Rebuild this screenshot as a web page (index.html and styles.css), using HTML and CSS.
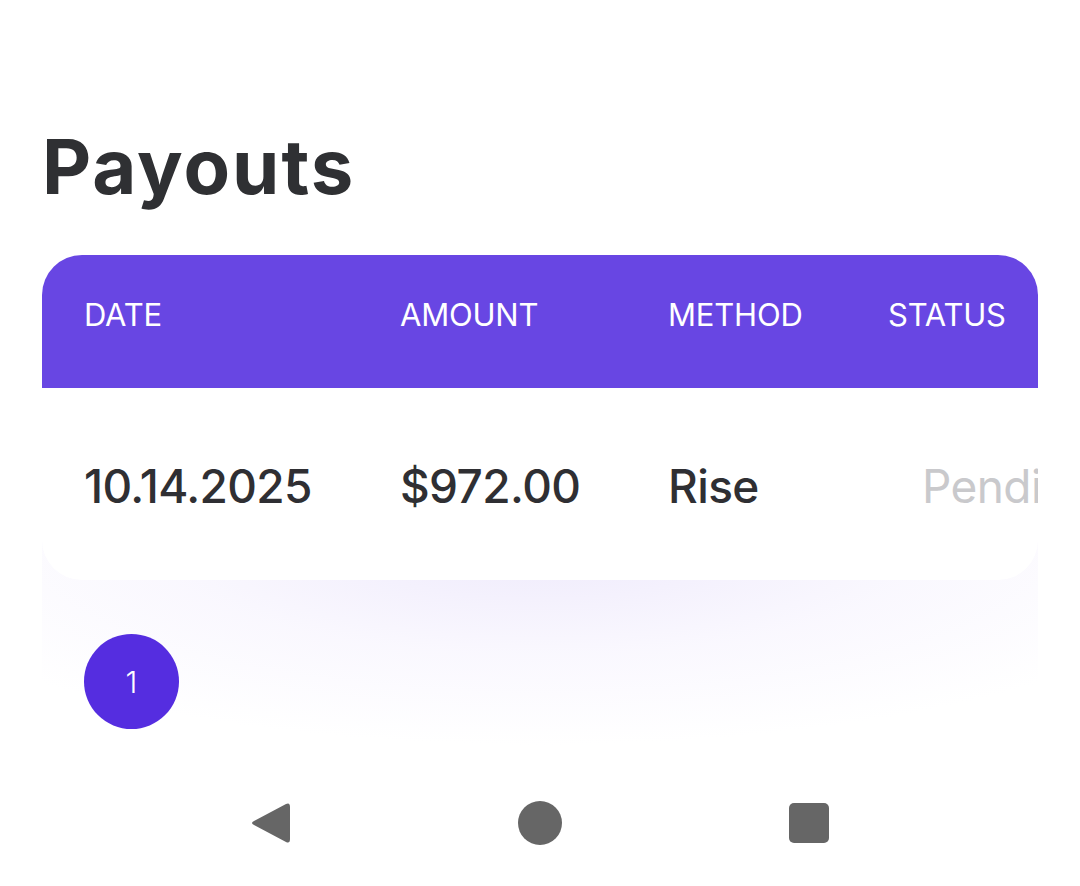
FILE: index.html
```html
<!DOCTYPE html>
<html lang="en">
<head>
<meta charset="utf-8">
<title>Payouts</title>
<link rel="stylesheet" href="styles.css">
</head>
<body>
<main class="screen">
  <h1 class="title">Payouts</h1>
  <section class="panel">
    <div class="table">
      <div class="row head">
        <div class="cell">DATE</div>
        <div class="cell">AMOUNT</div>
        <div class="cell">METHOD</div>
        <div class="cell">STATUS</div>
      </div>
      <div class="row body">
        <div class="cell">10.14.2025</div>
        <div class="cell">$972.00</div>
        <div class="cell">Rise</div>
        <div class="cell status">Pending</div>
      </div>
    </div>
    <div class="pager">
      <span class="page">1</span>
    </div>
  </section>
</main>
<nav class="navbar">
  <svg class="nav-icon" width="44" height="46" viewBox="0 0 44 46"><path d="M38 4 Q42 2 42 7 V39 Q42 44 38 42 L6 25 Q2 23 6 21 Z" fill="#666"/></svg>
  <svg class="nav-icon" width="46" height="46" viewBox="0 0 46 46"><circle cx="23" cy="23" r="22" fill="#666"/></svg>
  <svg class="nav-icon" width="42" height="42" viewBox="0 0 42 42"><rect x="1" y="1" width="40" height="40" rx="5" fill="#666"/></svg>
</nav>
</body>
</html>
```
FILE: styles.css
```css
* { box-sizing: border-box; }
html, body { margin: 0; padding: 0; background: #fff; }
body {
  width: 1080px;
  height: 886px;
  overflow: hidden;
  font-family: Inter, "Open Sans", Roboto, sans-serif;
  color: #2f2f33;
}
.screen {
  padding: 118px 42px 0 42px;
  height: 770px;
}
.title {
  margin: 0;
  font-size: 76px;
  line-height: 96px;
  font-weight: 700;
  letter-spacing: 2px;
  color: #2f3033;
}
.panel {
  margin-top: 41px;
  height: 490px;
  display: flex;
  flex-direction: column;
}
.table {
  border-radius: 40px;
  overflow: hidden;
  background: #fff;
  position: relative;
  z-index: 1;
}
.row {
  display: grid;
  grid-template-columns: 316px 268px 220px auto;
  padding-left: 42px;
  white-space: nowrap;
}
.head {
  background: #6846e3;
  color: #fff;
  height: 133px;
  padding-top: 41px;
  font-size: 31px;
  line-height: 38px;
  font-weight: 400;
  letter-spacing: -0.2px;
}
.body {
  height: 192px;
  align-items: center;
  font-size: 46px;
  font-weight: 500;
  letter-spacing: -0.6px;
  color: #2f2f33;
  padding-top: 4px;
}
.status {
  padding-left: 34px;
  color: #c9c9cc;
  font-weight: 400;
  overflow: hidden;
}
.pager {
  flex: 1;
  margin-top: -40px;
  padding: 94px 0 0 42px;
  background:
    radial-gradient(ellipse 70% 100% at 50% 0, rgba(236, 231, 251, 0.9) 0, rgba(246, 243, 254, 0.6) 55%, rgba(255, 255, 255, 0) 100%);
}
.page {
  display: flex;
  align-items: center;
  justify-content: center;
  width: 95px;
  height: 95px;
  border-radius: 50%;
  background: #552de0;
  color: #fff;
  font-size: 30px;
  font-weight: 300;
}
.navbar {
  display: flex;
  justify-content: space-between;
  align-items: center;
  padding: 30px 250px 0 248px;
}
.nav-icon { display: block; }
```
